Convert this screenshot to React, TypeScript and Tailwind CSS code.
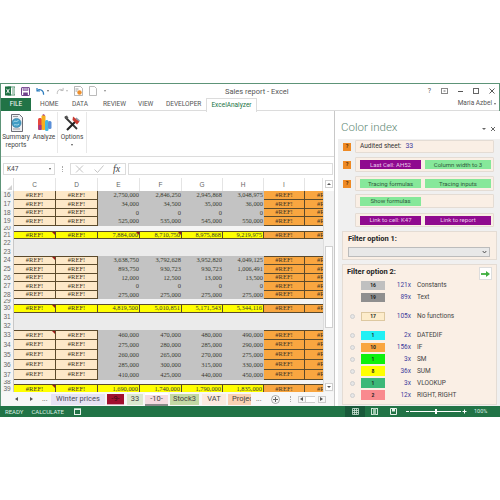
import React from "react";

const GRID = "grid grid-cols-[13px_42px_42px_42px_42px_41px_41px_41px_18px]";
const LINE = "border-[#5b4a2c]";

type Row = { n: string; h: string; k: "data" | "total" | "gap" | "thin"; v?: string[]; tick?: boolean; top?: boolean };

const rows: Row[] = [
  { n: "16", h: "h-[9px]", k: "data", v: ["2,750,000", "2,846,250", "2,945,868", "3,048,975"] },
  { n: "17", h: "h-[9px]", k: "data", v: ["34,000", "34,500", "35,000", "36,000"] },
  { n: "18", h: "h-[8px]", k: "data", v: ["0", "0", "0", "0"] },
  { n: "19", h: "h-[9px]", k: "data", v: ["525,000", "535,000", "545,000", "550,000"] },
  { n: "20", h: "h-[5px]", k: "thin" },
  { n: "21", h: "h-[8px]", k: "total", tick: true, v: ["7,884,000", "8,710,750", "8,975,868", "9,219,975"] },
  { n: "22", h: "h-[9px]", k: "gap" },
  { n: "23", h: "h-[8px]", k: "gap" },
  { n: "24", h: "h-[9px]", k: "data", tick: true, top: true, v: ["3,638,750", "3,792,628", "3,952,820", "4,049,125"] },
  { n: "25", h: "h-[9px]", k: "data", v: ["893,750", "930,723", "930,723", "1,006,491"] },
  { n: "26", h: "h-[8px]", k: "data", v: ["12,000", "12,500", "13,000", "13,500"] },
  { n: "27", h: "h-[9px]", k: "data", v: ["0", "0", "0", "0"] },
  { n: "28", h: "h-[8px]", k: "data", v: ["275,000", "275,000", "275,000", "275,000"] },
  { n: "29", h: "h-[5px]", k: "thin" },
  { n: "30", h: "h-[9px]", k: "total", tick: true, v: ["4,819,500", "5,010,851", "5,171,543", "5,344,116"] },
  { n: "31", h: "h-[9px]", k: "gap" },
  { n: "32", h: "h-[8px]", k: "gap" },
  { n: "33", h: "h-[10px]", k: "data", tick: true, top: true, v: ["460,000", "470,000", "480,000", "490,000"] },
  { n: "34", h: "h-[10px]", k: "data", v: ["275,000", "280,000", "285,000", "290,000"] },
  { n: "35", h: "h-[10px]", k: "data", v: ["260,000", "265,000", "270,000", "275,000"] },
  { n: "36", h: "h-[10px]", k: "data", v: ["285,000", "300,000", "315,000", "330,000"] },
  { n: "37", h: "h-[10px]", k: "data", v: ["410,000", "425,000", "440,000", "450,000"] },
  { n: "38", h: "h-[4px]", k: "thin" },
  { n: "39", h: "h-[10px]", k: "total", tick: true, v: ["1,690,000", "1,740,000", "1,790,000", "1,835,000"] },
];

function Tick() {
  return <span className="absolute top-0 right-0 w-0 h-0 border-t-[3px] border-l-[3px] border-t-[#a01818] border-l-transparent" />;
}

function RefCell({ bg, tick, top, cut }: { bg: string; tick?: boolean; top?: boolean; cut?: boolean }) {
  return (
    <div className={`relative flex items-center overflow-hidden border-b ${LINE} ${bg} ${top ? "border-t" : ""} ${cut ? "justify-start pl-[12px]" : "justify-center border-r"} text-[6.5px] leading-none text-[#3c3424]`}>
      <span className="whitespace-nowrap">#REF!</span>
      {tick && <Tick />}
    </div>
  );
}

function SheetRow({ r }: { r: Row }) {
  const head = (
    <div className="flex items-center justify-center bg-[#f4f4f4] border-r border-[#c8c8c8] font-['Liberation_Sans'] text-[6.5px] leading-none text-[#666] overflow-hidden">
      {r.n}
    </div>
  );
  if (r.k === "gap" || r.k === "thin") {
    return (
      <div className={`${GRID} ${r.h}`}>
        {head}
        <div className={`col-span-8 ${r.k === "gap" ? "bg-[#ebebeb]" : "bg-[#f4f4f4]"}`} />
      </div>
    );
  }
  const total = r.k === "total";
  const c = total ? "bg-[#ffff00]" : "bg-[#fde8c8]";
  const o = "bg-[#f9a640]";
  return (
    <div className={`${GRID} ${r.h} font-['Liberation_Serif']`}>
      {head}
      <RefCell bg={c} tick={r.tick} top={r.top || total} />
      <RefCell bg={c} top={r.top || total} />
      {(r.v as string[]).map((x, i) => (
        <div
          key={i}
          className={`relative flex items-center justify-end pr-[1px] text-[6.4px] leading-none text-[#3a3a30] overflow-hidden ${total ? `bg-[#ffff00] border-r border-t border-b ${LINE}` : "bg-[#c3c3c3]"}`}
        >
          <span className="whitespace-nowrap">{x}</span>
          {total && i < 2 && r.n === "21" && <Tick />}
        </div>
      ))}
      <RefCell bg={o} top={r.top || total} />
      <RefCell bg={o} top={r.top || total} cut />
    </div>
  );
}

function ExcelLogo() {
  return (
    <svg width="10" height="10" viewBox="0 0 10 10">
      <rect x="3" y="1" width="7" height="8" fill="#fff" stroke="#217346" strokeWidth="0.8" />
      <rect x="0" y="0.5" width="6" height="9" fill="#1d6f42" />
      <path d="M1.5 2.8L4.4 7.2M4.4 2.8L1.5 7.2" stroke="#fff" strokeWidth="0.9" />
      <path d="M7 3h2M7 5h2M7 7h2" stroke="#217346" strokeWidth="0.7" />
    </svg>
  );
}

function Qat() {
  return (
    <div className="flex items-center h-full relative">
      <div className="ml-[4px]"><ExcelLogo /></div>
      <svg className="ml-[6px]" width="9" height="9" viewBox="0 0 9 9">
        <rect x="0.5" y="0.5" width="8" height="8" rx="0.6" fill="#fff" stroke="#70438c" />
        <rect x="2" y="0.5" width="5" height="3" fill="#b79bc8" stroke="#70438c" strokeWidth="0.5" />
        <rect x="2.2" y="5.5" width="4.6" height="3" fill="#70438c" />
      </svg>
      <svg className="ml-[6px]" width="9" height="9" viewBox="0 0 9 9" fill="none">
        <path d="M1 1v3h3" stroke="#2b7cbd" strokeWidth="1.2" />
        <path d="M1.3 3.8C3 1.8 7.8 2.2 7.6 7.8" stroke="#2b7cbd" strokeWidth="1.2" />
      </svg>
      <span className="ml-[2px] w-0 h-0 border-l-[1.5px] border-r-[1.5px] border-t-[2px] border-l-transparent border-r-transparent border-t-[#666]" />
      <svg className="ml-[7px]" width="8" height="8" viewBox="0 0 9 9" fill="none">
        <path d="M8 1v3H5" stroke="#bbb" strokeWidth="1.1" />
        <path d="M7.7 3.8C6 1.8 1.2 2.2 1.4 7.8" stroke="#bbb" strokeWidth="1.1" />
      </svg>
      <span className="ml-[2px] w-0 h-0 border-l-[1.5px] border-r-[1.5px] border-t-[2px] border-l-transparent border-r-transparent border-t-[#bbb]" />
      <svg className="ml-[6px]" width="9" height="10" viewBox="0 0 9 10">
        <path d="M0.5 0.5h6l2 2v7h-8z" fill="#fff" stroke="#999" strokeWidth="0.7" />
        <circle cx="5.5" cy="6.5" r="2.2" fill="#ee8f2c" />
        <path d="M1.5 3h3M1.5 5h2" stroke="#777" strokeWidth="0.7" />
      </svg>
      <svg className="ml-[6px]" width="8" height="10" viewBox="0 0 8 10" fill="none">
        <path d="M0.5 0.5h5l2 2v7h-7z" fill="#fff" stroke="#aaa" strokeWidth="0.8" />
      </svg>
      <span className="ml-[7px] w-0 h-0 border-l-[1.5px] border-r-[1.5px] border-t-[2px] border-l-transparent border-r-transparent border-t-[#888]" />
    </div>
  );
}

function SummaryIcon() {
  return (
    <svg width="15" height="18" viewBox="0 0 15 18">
      <path d="M2.5 0.5h8l3 3v14h-11z" fill="#eef0f4" stroke="#4a4a55" strokeWidth="0.8" />
      <path d="M4 2.5h5M4 15h7" stroke="#777" strokeWidth="0.7" />
      <circle cx="7.5" cy="9" r="4.6" fill="#3f9cc4" stroke="#2a6f92" strokeWidth="0.5" />
      <path d="M4.5 8c2-2 3 1 5-2M5 11c2-1 3 1 5-1" stroke="#c8ecf6" strokeWidth="0.8" fill="none" />
    </svg>
  );
}

function AnalyzeIcon() {
  return (
    <svg width="15" height="18" viewBox="0 0 15 18">
      <rect x="1" y="4" width="4" height="12" rx="1.5" fill="#e8483c" />
      <rect x="4.5" y="1" width="4" height="15" rx="1.5" fill="#f6b01e" />
      <path d="M5 1l2-1 1 2z" fill="#a03a8c" />
      <rect x="8" y="6" width="3.5" height="11" rx="1.5" fill="#49b8e0" />
      <rect x="11" y="7" width="3.5" height="8" rx="1.5" fill="#5a8fd8" />
      <rect x="1.5" y="11" width="3" height="5" fill="#a03a8c" />
    </svg>
  );
}

function OptionsIcon() {
  return (
    <svg width="17" height="16" viewBox="0 0 17 16">
      <path d="M1 2L13 14" stroke="#333" strokeWidth="1.8" />
      <path d="M0.5 1.5L3 0.5 4.5 3 2.5 4.5z" fill="#555" />
      <path d="M3 15L12 6" stroke="#222" strokeWidth="2.2" />
      <path d="M9 1.5L15.5 6.5 13 9.5 8.5 5z" fill="#c83b32" />
      <path d="M12 3l3.5 3" stroke="#8f9aa8" strokeWidth="1.5" />
    </svg>
  );
}

function RibbonBtn({ icon, lines, w, caret }: { icon: React.ReactNode; lines: string[]; w: string; caret?: boolean }) {
  return (
    <div className={`flex flex-col items-center pt-[2px] ${w}`}>
      <div className="h-[18px] flex items-center justify-center">{icon}</div>
      <div className="mt-[1px] text-[6.5px] leading-[8px] text-[#444] text-center whitespace-nowrap">
        {lines.map((l) => <div key={l}>{l}</div>)}
      </div>
      {caret && <span className="mt-[3px] w-0 h-0 border-l-[1.5px] border-r-[1.5px] border-t-[2px] border-l-transparent border-r-transparent border-t-[#555]" />}
    </div>
  );
}

function SheetTab({ label, cls, w }: { label: string; cls: string; w: string }) {
  return <div className={`h-[11px] flex items-center justify-center text-[7.5px] leading-none whitespace-nowrap overflow-hidden ${w} ${cls}`}>{label}</div>;
}

function Arrow({ dir, color = "#555" }: { dir: "l" | "r"; color?: string }) {
  return (
    <svg width="3" height="4" viewBox="0 0 3 4"><path d={dir === "l" ? "M3 0L0 2l3 2z" : "M0 0l3 2-3 2z"} fill={color} /></svg>
  );
}

function PaneBtn({ label, kind, w }: { label: string; kind: "p" | "g"; w: string }) {
  return (
    <div className={`h-[9px] flex items-center justify-center text-[6px] leading-none whitespace-nowrap ${w} ${kind === "p" ? "bg-[#8f0a8f] text-[#e9c7e9]" : "bg-[#86e89a] text-[#2f5a3c]"}`}>
      {label}
    </div>
  );
}

function Q() {
  return <div className="w-[8px] h-[8px] bg-[#ee8a24] text-[5.5px] font-bold text-[#5a3208] flex items-center justify-center leading-none">?</div>;
}

function PaneRow({ q, h, children }: { q?: boolean; h: string; children: React.ReactNode }) {
  return (
    <div className="flex items-center">
      <div className="w-[17px] pl-[5px] shrink-0">{q && <Q />}</div>
      <div className={`w-[139px] ${h} bg-[#faefe5] border border-[#e4dcd4] rounded-[1px] flex items-center gap-[4px] pl-[4px]`}>{children}</div>
    </div>
  );
}

function Swatch({ color, n, radio, count, label, mt, ring }: { color: string; n: string; radio?: boolean; count: string; label: string; mt: string; ring?: string }) {
  return (
    <div className={`flex items-center h-[9px] ${mt}`}>
      <div className="w-[18px] pl-[7px] shrink-0">
        {radio && <div className="w-[5px] h-[5px] rounded-full bg-[#e6e6e6] border border-[#cfcfcf]" />}
      </div>
      <div className={`w-[24px] h-[9.5px] ${color} ${ring ?? ""} flex items-center justify-center text-[5px] font-bold leading-none text-[#222] shrink-0`}>{n}</div>
      <div className="w-[26px] text-right text-[6.5px] leading-none text-[#3c3c9c] shrink-0">{count}</div>
      <div className="ml-[6px] text-[6.5px] leading-none text-[#444] whitespace-nowrap">{label}</div>
    </div>
  );
}

function Pane() {
  return (
    <div className="w-[166px] h-full border-l border-[#c8c8c8] bg-white flex flex-col shrink-0">
      <div className="h-[28px] flex items-end pl-[6px] pb-[4px] relative">
        <span className="text-[11.5px] leading-[16px] text-[#5f8a76] font-light">Color index</span>
        <span className="ml-auto mr-[4px] flex items-center gap-[4px] pb-[3px]">
          <span className="w-0 h-0 border-l-[2px] border-r-[2px] border-t-[2.5px] border-l-transparent border-r-transparent border-t-[#666]" />
          <svg width="6" height="6" viewBox="0 0 6 6"><path d="M1 1l4 4M5 1l-4 4" stroke="#555" strokeWidth="0.9" /></svg>
        </span>
      </div>
      <div className="ml-[3px] flex-1 bg-[#f0f0f0] flex flex-col pt-[1px]">
        <PaneRow q h="h-[13px]">
          <span className="text-[6.5px] leading-none text-[#333]">Audited sheet:</span>
          <span className="text-[7px] leading-none text-[#3c3c9c]">33</span>
        </PaneRow>
        <div className="mt-[4px]">
          <PaneRow q h="h-[15px]">
            <PaneBtn kind="p" label="Last Cell: AH52" w="w-[61px]" />
            <PaneBtn kind="g" label="Column width to 3" w="w-[66px]" />
          </PaneRow>
        </div>
        <div className="mt-[4px]">
          <PaneRow q h="h-[15px]">
            <PaneBtn kind="g" label="Tracing formulas" w="w-[61px]" />
            <PaneBtn kind="g" label="Tracing inputs" w="w-[66px]" />
          </PaneRow>
        </div>
        <div className="mt-[3px]">
          <PaneRow h="h-[14px]">
            <PaneBtn kind="g" label="Show formulas" w="w-[61px]" />
          </PaneRow>
        </div>
        <div className="mt-[5px]">
          <PaneRow h="h-[14px]">
            <PaneBtn kind="p" label="Link to cell: K47" w="w-[61px]" />
            <PaneBtn kind="p" label="Link to report" w="w-[66px]" />
          </PaneRow>
        </div>
        <div className="mt-[4px] ml-[4px] w-[155px] h-[29px] bg-[#faefe5] border border-[#e4dcd4] pl-[5px] pr-[6px] pt-[2px]">
          <div className="text-[7.5px] leading-[10px] font-bold text-[#222]">Filter option 1:</div>
          <div className="mt-[3px] h-[10px] bg-[#e8e8e8] border border-[#bcbcbc] flex items-center justify-end pr-[2px]">
            <svg width="5" height="4" viewBox="0 0 5 4"><path d="M0.7 1l1.8 2 1.8-2" stroke="#444" strokeWidth="0.9" fill="none" /></svg>
          </div>
        </div>
        <div className="mt-[4px] ml-[4px] w-[155px] h-[141px] bg-[#faefe5] border border-[#e4dcd4]">
          <div className="flex items-start h-[16px] pl-[4px] pt-[2px] relative">
            <span className="text-[7.5px] leading-[10px] font-bold text-[#222]">Filter option 2:</span>
            <div className="absolute right-[4px] top-[2px] w-[13px] h-[13px] bg-white border border-[#ddd] flex items-center justify-center">
              <svg width="9" height="6" viewBox="0 0 9 6"><path d="M0 3h6" stroke="#3fae3f" strokeWidth="1.8" /><path d="M5 0l4 3-4 3z" fill="#3fae3f" /></svg>
            </div>
          </div>
          <Swatch mt="" color="bg-[#c0c0c0]" n="16" count="121x" label="Constants" />
          <Swatch mt="mt-[3px]" color="bg-[#8f8f8f]" n="19" count="89x" label="Text" />
          <Swatch mt="mt-[10px]" radio color="bg-[#fdeccb]" ring="border border-[#ddc8a0]" n="17" count="105x" label="No functions" />
          <Swatch mt="mt-[10px]" radio color="bg-[#22f0f4]" n="1" count="2x" label="DATEDIF" />
          <Swatch mt="mt-[3px]" radio color="bg-[#f9a640]" n="10" count="156x" label="IF" />
          <Swatch mt="mt-[2.5px]" radio color="bg-[#0ef00e]" n="1" count="3x" label="SM" />
          <Swatch mt="mt-[3px]" radio color="bg-[#ffff00]" n="8" count="36x" label="SUM" />
          <Swatch mt="mt-[3px]" radio color="bg-[#3cb878]" n="1" count="3x" label="VLOOKUP" />
          <Swatch mt="mt-[3px]" radio color="bg-[#f98a8e]" n="2" count="12x" label="RIGHT, RIGHT" />
        </div>
      </div>
    </div>
  );
}

function Left() {
  return (
    <div className="w-[333px] shrink-0 flex flex-col">
      <div className="h-[46px] flex border-b border-[#dcdcdc] pt-[1px]">
        <RibbonBtn w="w-[30px]" icon={<SummaryIcon />} lines={["Summary", "reports"]} />
        <RibbonBtn w="w-[26px]" icon={<AnalyzeIcon />} lines={["Analyze"]} />
        <div className="w-px h-[41px] bg-[#e8e8e8]" />
        <RibbonBtn w="w-[28px]" icon={<OptionsIcon />} lines={["Options"]} caret />
        <div className="w-px h-[41px] bg-[#e8e8e8]" />
      </div>
      <div className="h-[20px] flex items-start pt-[6px] pl-[2px] pr-[1px]">
        <div className="w-[52px] h-[12px] border border-[#dcdcdc] flex items-center pl-[3px] pr-[3px] text-[6.5px] leading-none text-[#444]">
          K47
          <span className="ml-auto w-0 h-0 border-l-[1.5px] border-r-[1.5px] border-t-[2px] border-l-transparent border-r-transparent border-t-[#555]" />
        </div>
        <div className="w-[15px] h-[12px] flex items-center justify-center">
          <div className="w-px h-[6px] border-l border-dotted border-[#aaa]" />
        </div>
        <div className="w-[56px] h-[12px] border border-[#dcdcdc] flex items-center pl-[4px]">
          <svg width="9" height="8" viewBox="0 0 9 8"><path d="M1 0.5l7 7M8 0.5l-7 7" stroke="#c4c4c4" strokeWidth="1" /></svg>
          <svg className="ml-[10px]" width="10" height="8" viewBox="0 0 10 8" fill="none"><path d="M0.5 4.5l3 3 6-7" stroke="#c4c4c4" strokeWidth="1" /></svg>
          <span className="ml-[9px] font-['Liberation_Serif'] italic text-[10px] leading-none text-[#444]">fx</span>
        </div>
        <div className="ml-[2px] flex-1 h-[12px] border border-[#dcdcdc] bg-white" />
      </div>
      <div className="h-[14px] flex">
        <div className={`${GRID} flex-1 font-['Liberation_Sans'] text-[6.5px] text-[#666] pt-[1px]`}>
          <div className="flex items-end justify-end pr-[1px] pb-[1px] border-r border-[#ddd]">
            <svg width="5" height="5" viewBox="0 0 5 5"><path d="M5 0v5H0z" fill="#d0d0d0" /></svg>
          </div>
          {["C", "D", "E", "F", "G", "H", "I", ""].map((c, i) => (
            <div key={i} className="flex items-center justify-center border-r border-[#e4e4e4]">{c}</div>
          ))}
        </div>
        <div className="w-[11px] flex items-center justify-center">
          <div className="w-[8px] h-[8px] bg-white border border-[#d0d0d0] flex items-center justify-center">
            <span className="w-0 h-0 border-l-[2px] border-r-[2px] border-b-[2px] border-l-transparent border-r-transparent border-b-[#555]" />
          </div>
        </div>
      </div>
      <div className="h-[201px] flex overflow-hidden">
        <div className="w-[322px] h-[201px] overflow-hidden">
          {rows.map((r) => <SheetRow key={r.n} r={r} />)}
        </div>
        <div className="w-[11px] relative bg-[#f3f3f3] border-l border-[#ddd]">
          <div className="absolute left-[1px] top-[55px] w-[8px] h-[82px] bg-white border border-[#d0d0d0]" />
          <div className="absolute left-[1px] bottom-[1px] w-[8px] h-[8px] bg-white border border-[#d0d0d0] flex items-center justify-center">
            <span className="w-0 h-0 border-l-[2px] border-r-[2px] border-t-[2px] border-l-transparent border-r-transparent border-t-[#555]" />
          </div>
        </div>
      </div>
      <div className="h-[14px] flex items-center bg-[#f7f7f7] text-[#444] relative">
        <div className="w-[50px] flex items-center pl-[14px]">
          <Arrow dir="l" />
          <span className="ml-[12px]"><Arrow dir="r" /></span>
          <span className="ml-[9px] text-[7px] leading-none">...</span>
        </div>
        <SheetTab w="w-[54px]" cls="bg-[#e6e3f3] text-[#4a4a5a]" label="Winter prices" />
        <SheetTab w="w-[17px] ml-[2px]" cls="bg-[#a10f2e] text-[#3a0a14] border-b border-[#d8a0b0]" label="-9-" />
        <SheetTab w="w-[16px] ml-[3px]" cls="bg-[#dbe8cf]" label="33" />
        <div className="ml-[2px] w-[23px] h-[13px] bg-white flex items-end">
          <SheetTab w="w-[23px]" cls="bg-[#f4dbe0] border-b-2 border-[#8a8a8a]" label="-10-" />
        </div>
        <SheetTab w="w-[29px] ml-[2px]" cls="bg-[#c4d8a4]" label="Stock3" />
        <SheetTab w="w-[24px] ml-[3px]" cls="bg-[#fbeadf]" label="VAT" />
        <SheetTab w="w-[23px] ml-[2px]" cls="bg-[#f9d1b2] justify-start pl-[4px]" label="Projec" />
        <span className="ml-[5px] text-[7px] leading-none">...</span>
        <svg className="ml-[9px]" width="9" height="9" viewBox="0 0 9 9" fill="none">
          <circle cx="4.5" cy="4.5" r="4" stroke="#888" strokeWidth="0.7" />
          <path d="M4.5 2v5M2 4.5h5" stroke="#666" strokeWidth="1" />
        </svg>
        <div className="ml-[10px] w-px h-[6px] border-l border-dotted border-[#aaa]" />
        <div className="ml-[7px] w-[8px] h-[7px] border border-[#ccc] flex items-center justify-center"><Arrow dir="l" /></div>
        <div className="w-[9px] h-[7px] bg-white border-y border-[#ccc]" />
        <div className="ml-[3px] w-[8px] h-[7px] border border-[#ccc] flex items-center justify-center"><Arrow dir="r" /></div>
      </div>
    </div>
  );
}

function StatusBar() {
  return (
    <div className="h-[11px] bg-[#217346] flex items-center text-[#dcefe4] text-[6px] leading-none shrink-0 -ml-px -mr-px">
      <span className="ml-[5px]">READY</span>
      <span className="ml-[8px]">CALCULATE</span>
      <svg className="ml-[10px]" width="7" height="7" viewBox="0 0 7 7"><rect x="0.5" y="1.5" width="6" height="5" fill="none" stroke="#e6f2ea" /><path d="M0 1h7" stroke="#e6f2ea" strokeWidth="1.4" /></svg>
      <div className="ml-auto flex items-center mr-[11px]">
        <div className="w-[20px] h-[11px] bg-[#19593a] flex items-center justify-center">
          <svg width="7" height="7" viewBox="0 0 7 7" fill="none" stroke="#cfe6d8" strokeWidth="0.8"><path d="M0.5 0.5h6v6h-6zM0.5 2.5h6M0.5 4.5h6M2.5 0.5v6M4.5 0.5v6" /></svg>
        </div>
        <svg className="ml-[6px]" width="7" height="7" viewBox="0 0 7 7" fill="none"><rect x="0.5" y="0.5" width="6" height="6" stroke="#cfe6d8" /><rect x="2" y="0.5" width="3" height="6" fill="#9cc8ae" /></svg>
        <svg className="ml-[12px]" width="7" height="7" viewBox="0 0 7 7" fill="none"><path d="M0.5 0.5h6v6h-6z" stroke="#e6f2ea" /><path d="M2 0.5v3h3v-3" fill="#e6f2ea" /></svg>
        <span className="ml-[9px] w-[3px] h-px bg-white" />
        <div className="ml-[1px] w-[51px] h-px bg-white relative">
          <span className="absolute left-[25px] -top-[2px] w-[2px] h-[5px] bg-white" />
        </div>
        <svg className="ml-[1px]" width="5" height="5" viewBox="0 0 5 5"><path d="M2.5 0.5v4M0.5 2.5h4" stroke="#fff" /></svg>
        <span className="ml-[7px] w-[15px] text-[5.5px]">100%</span>
      </div>
    </div>
  );
}

export default function App() {
  return (
    <div className="w-[500px] h-[500px] bg-white pt-[83px] font-['Roboto',sans-serif] overflow-hidden">
      <div className="h-[334px] flex flex-col border-t border-x border-[#5d9478]">
        <div className="h-[14px] relative shrink-0">
          <Qat />
          <span className="absolute left-[224px] top-[3px] text-[7.5px] leading-[9px] text-[#555] whitespace-nowrap">Sales report - Excel</span>
          <div className="absolute right-[4px] top-[3px] flex items-center gap-[10px] text-[#555]">
            <span className="text-[7px] leading-[8px]">?</span>
            <svg width="7" height="6" viewBox="0 0 7 6" fill="none"><rect x="0.5" y="0.5" width="6" height="5" stroke="#888" /><path d="M2.5 3h2" stroke="#666" /></svg>
            <span className="w-[5px] h-px bg-[#555]" />
            <span className="w-[6px] h-[6px] border border-[#666]" />
            <svg width="6" height="6" viewBox="0 0 6 6"><path d="M0.5 0.5l5 5M5.5 0.5l-5 5" stroke="#444" strokeWidth="0.9" /></svg>
          </div>
        </div>
        <div className="h-[13px] relative flex items-center border-b border-[#dcdcdc] text-[6.5px] leading-none text-[#555] shrink-0">
          <div className="w-[30px] h-[13px] bg-[#217346] text-white flex items-center justify-center">FILE</div>
          <span className="ml-[9px] w-[17px]">HOME</span>
          <span className="ml-[15px] w-[16px]">DATA</span>
          <span className="ml-[15px] w-[20px]">REVIEW</span>
          <span className="ml-[15px] w-[13px]">VIEW</span>
          <span className="ml-[15px] w-[31px]">DEVELOPER</span>
          <div className="ml-[9px] w-[51px] h-[14px] -mb-px bg-white border border-b-0 border-[#dcdcdc] text-[#217346] flex items-center justify-center">ExcelAnalyzer</div>
          <span className="absolute right-[3px] top-[1px] text-[6.5px] leading-[9px] text-[#555] whitespace-nowrap flex items-center gap-[2px]">
            Maria Azbel
            <span className="w-0 h-0 border-l-[1.5px] border-r-[1.5px] border-t-[2px] border-l-transparent border-r-transparent border-t-[#666]" />
          </span>
        </div>
        <div className="h-[295px] flex shrink-0">
          <Left />
          <Pane />
        </div>
        <StatusBar />
      </div>
    </div>
  );
}
